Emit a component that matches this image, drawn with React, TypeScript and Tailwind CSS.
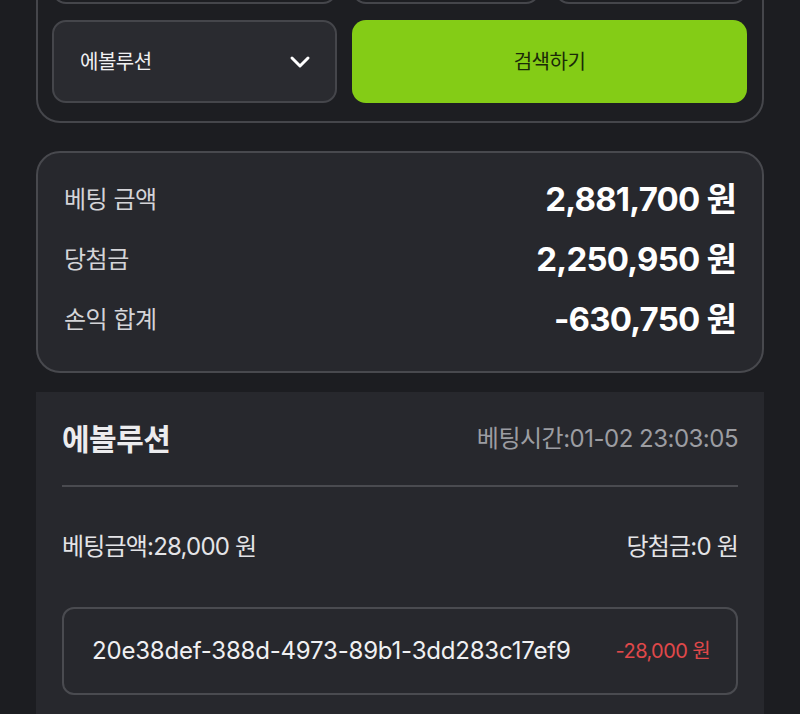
import React from "react";

const font = { fontFamily: '"Inter", "Noto Sans CJK KR", sans-serif' };

export default function App() {
  return (
    <div className="w-[800px] h-[714px] overflow-hidden bg-[#1c1d21] text-white" style={font}>
      <div className="mx-[36px] -mt-[80px] rounded-[24px] border-2 border-[#45464b] bg-[#1d1e22] px-[14px] pt-[14px] pb-[18px]">
        <div className="grid grid-cols-[285px_188px_192px] gap-x-[15px] gap-y-[16px]">
          <div className="h-[68px] rounded-[14px] border-2 border-[#45464b]" />
          <div className="h-[68px] rounded-[14px] border-2 border-[#45464b]" />
          <div className="h-[68px] rounded-[14px] border-2 border-[#45464b]" />
          <div className="flex h-[83px] items-center justify-between rounded-[14px] border-2 border-[#45464b] bg-[#2a2b30] pl-[26px] pr-[24px]">
            <span className="text-[20px] tracking-[-0.5px] text-[#f0f0f2]">에볼루션</span>
            <svg width="22" height="14" viewBox="0 0 22 14" fill="none">
              <path d="M3 3l8 8 8-8" stroke="#fff" strokeWidth="3" strokeLinecap="round" strokeLinejoin="round" />
            </svg>
          </div>
          <button className="col-span-2 flex h-[83px] items-center justify-center rounded-[14px] bg-[#84cc16] text-[20px] tracking-[-0.5px] text-[#1a2a08]">
            검색하기
          </button>
        </div>
      </div>

      <div className="mx-[36px] mt-[28px] flex flex-col gap-[18px] rounded-[24px] border-2 border-[#48494e] bg-[#27282d] px-[26px] pt-[26px] pb-[30px]">
        {[
          ["베팅 금액", "2,881,700 원"],
          ["당첨금", "2,250,950 원"],
          ["손익 합계", "-630,750 원"],
        ].map(([l, v]) => (
          <div key={l} className="flex h-[42px] items-center justify-between">
            <span className="text-[24px] tracking-[-0.5px] text-[#d4d4d8]">{l}</span>
            <span className="text-[33px] font-bold tracking-[-0.8px] text-white">{v}</span>
          </div>
        ))}
      </div>

      <div className="mx-[36px] mt-[19px] bg-[#27282d] px-[26px] pt-[26px] pb-[30px]">
        <div className="flex h-[42px] items-center justify-between">
          <span className="text-[30px] font-bold tracking-[-0.5px] text-[#ececee]">에볼루션</span>
          <span className="text-[24px] tracking-[-0.5px] text-[#9c9da2]">베팅시간:01-02 23:03:05</span>
        </div>
        <div className="mt-[25px] h-[2px] bg-[#4a4b50]" />
        <div className="mt-[42px] flex items-center justify-between text-[24px] tracking-[-0.8px] text-[#e4e4e7]">
          <span>베팅금액:28,000 원</span>
          <span>당첨금:0 원</span>
        </div>
        <div className="mt-[42px] flex h-[88px] items-center justify-between rounded-[12px] border-2 border-[#4a4b50] pl-[28px] pr-[26px]">
          <span className="text-[24px] tracking-[-0.2px] text-[#f0f0f2]">20e38def-388d-4973-89b1-3dd283c17ef9</span>
          <span className="text-[20px] tracking-[-0.6px] text-[#e0484a]">-28,000 원</span>
        </div>
      </div>
    </div>
  );
}
